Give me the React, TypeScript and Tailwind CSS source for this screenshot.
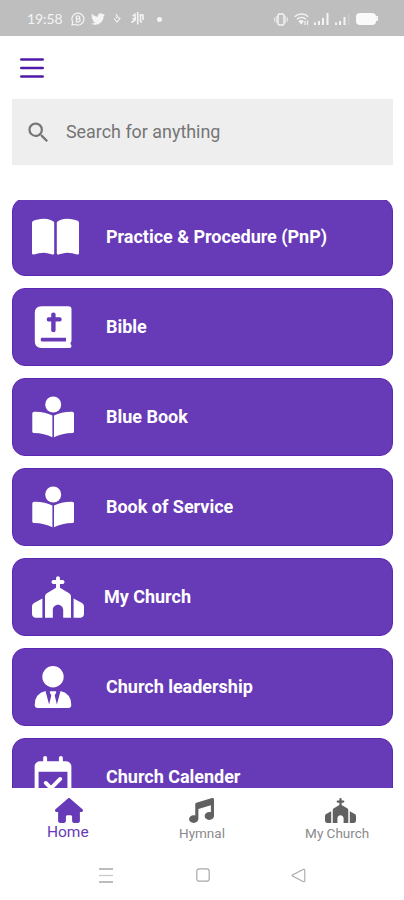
import React from "react";
import { FaTwitter } from "react-icons/fa";
import {
  FaBookOpen,
  FaChurch,
  FaHouse,
  FaMusic,
  FaRegCalendarCheck,
} from "react-icons/fa6";
import { MdSearch } from "react-icons/md";

const BibleIcon = ({ className }: { className?: string }) => (
  <svg viewBox="0 0 42 42" fill="currentColor" className={className}>
    <path
      fillRule="evenodd"
      d="M9.500.3H36.500Q39.500.3 39.500 3.300V34.500Q39.500 35.800 38.600 36.600V38.300Q39.500 38.800 39.500 40Q39.500 42 37.500 42H9.500Q2.800 42 2.800 35.500V7Q2.800.3 9.500.3zM19.200 8.300V11.300H16.500Q14.700 11.300 14.700 13.400T16.500 15.500H19.200V24.300Q19.200 26.300 21.400 26.300T23.600 24.300V15.500H27.700Q29.700 15.500 29.700 13.400T27.700 11.300H23.600V8.300Q23.600 6.500 21.400 6.500T19.200 8.300zM9.800 31.700Q8.700 31.700 8.700 33.600T9.800 35.600H34V31.700z"
    />
  </svg>
);

const ReaderIcon = ({ className }: { className?: string }) => (
  <svg viewBox="0 0 42 42" fill="currentColor" className={className}>
    <circle cx="21.200" cy="8.500" r="8" />
    <path d="M2.200 15.800Q13 15.600 20.400 19.600V41.300Q12.500 37.300 2 37.100Q.3 37 .3 35.400V17.500Q.3 15.900 2.200 15.800z" />
    <path d="M40.200 15.800Q29.400 15.600 22 19.600V41.300Q29.900 37.300 40.400 37.100Q42 37 42 35.400V17.500Q42 15.900 40.200 15.800z" />
  </svg>
);

const LeaderIcon = ({ className }: { className?: string }) => (
  <svg viewBox="0 0 42 42" fill="currentColor" className={className}>
    <circle cx="21" cy="10.800" r="10.700" />
    <path d="M13.500 25Q2.700 27.500 2.700 39Q2.700 42 5.700 42H36.300Q39.300 42 39.300 39Q39.300 27.500 28.500 25L24.900 38.500L22.700 29.500L24.200 26.500Q24.500 25.300 23.500 25.300H18.500Q17.500 25.300 17.800 26.500L19.300 29.500L17.100 38.500z" />
  </svg>
);

const menu = [
  { title: "Practice & Procedure (PnP)", icon: FaBookOpen, size: "h-[42px] w-[47px]" },
  { title: "Bible", icon: BibleIcon, size: "h-[42px] w-[42px]" },
  { title: "Blue Book", icon: ReaderIcon, size: "h-[42px] w-[42px]" },
  { title: "Book of Service", icon: ReaderIcon, size: "h-[42px] w-[42px]" },
  { title: "My Church", icon: FaChurch, size: "h-[42px] w-[52px]", wide: true },
  { title: "Church leadership", icon: LeaderIcon, size: "h-[42px] w-[42px]" },
  { title: "Church Calender", icon: FaRegCalendarCheck, size: "h-[42px] w-[42px]" },
];

const StatusBar = () => {
  return (
    <div className="flex h-9 shrink-0 items-center bg-[#bebebe] pl-[27px] text-[#f4f4f4]">
      <span className="w-[44px] text-[14px] tracking-[-0.1px] font-['Lato']">
        19:58
      </span>
      {/* notifications */}
      <svg width="14" height="14" viewBox="0 0 14 14" fill="none" stroke="currentColor" className="mt-px">
        <path d="M1 13l.7-3A6 6 0 1 1 4 12.3z" strokeWidth="1.2" />
        <path d="M5.4 4h2a1.3 1.3 0 0 1 0 2.8h-2zM5.4 6.8h2.3a1.5 1.5 0 0 1 0 3H5.4z" strokeWidth="1.2" />
      </svg>
      <FaTwitter size={14} className="ml-[6px] mt-px" />
      <svg width="8" height="10" viewBox="0 0 8 10" fill="none" stroke="currentColor" className="ml-[8px]">
        <path d="M3 1l1.500 2.500L3 5M1 5.500L4 9l3-3.500-2-1" strokeWidth="1.1" />
      </svg>
      <svg width="13" height="13" viewBox="0 0 13 13" fill="none" stroke="currentColor" className="ml-[10px] mt-px">
        <path d="M4 1.500v6.500L.5 10.500M1.500 3.500H4M1.500 6.800H5M6.700 0v12.500M9.500 2v7.500l1.500.5M9.500 3h2.500v5" strokeWidth="1.6" />
      </svg>
      <span className="ml-[13px] mt-[2px] size-[5px] rounded-full bg-[#f4f4f4]" />

      {/* vibrate, wifi, signal, battery */}
      <svg width="14" height="13" viewBox="0 0 14 13" fill="none" stroke="currentColor" className="ml-[112px] mt-[2px]">
        <rect x="4" y="1" width="6" height="11" rx="1.5" strokeWidth="1.5" />
        <path d="M2.300 3v7M.6 4.500v4M11.700 3v7M13.400 4.500v4" strokeWidth="0.8" />
      </svg>
      <svg width="15" height="13" viewBox="0 0 15 13" fill="none" stroke="currentColor" className="ml-[6px] mt-[2px]">
        <path d="M.7 3.800C4.500.2 10.500.2 14.300 3.800M3 6.200c2.600-2.300 6.400-2.300 9 0" strokeWidth="1.5" />
        <path d="M4.500 8.200c1.700-1.500 3.700-1.500 5.400 0L7.200 11.800z" fill="currentColor" stroke="none" />
        <path d="M11 8V12M13.500 7.500V12" strokeWidth="1.2" />
      </svg>
      <svg width="15" height="12" viewBox="0 0 15 12" fill="currentColor" className="ml-[5px] mt-[2px]">
        <path d="M0 9.500h2V12H0zM4 8h2v4H4zM8 5h2v7H8zM12.500 0h2v12h-2z" />
      </svg>
      <svg width="15" height="12" viewBox="0 0 15 12" fill="currentColor" className="ml-[6px] mt-[2px]">
        <path d="M0 9.500h2V12H0zM4 8h2v4H4zM8.500 4h2v8h-2z" />
        <path d="M13 1h1.500v11H13z" opacity=".2" />
      </svg>
      <span className="ml-[6px] mt-px h-3 w-[20px] rounded-[4px] bg-[#fafafa]" />
      <span className="mt-px h-[5px] w-[2px] bg-[#f4f4f4]" />
    </div>
  );
};

const App = () => {
  return (
    <main className="flex h-[900px] w-[404px] flex-col overflow-hidden bg-white font-['Roboto',sans-serif]">
      <StatusBar />

      {/* menu button */}
      <div className="h-[63px] shrink-0 pl-5 pt-[22px]">
        <svg width="24" height="20" viewBox="0 0 24 20" fill="none" stroke="#4f1ba8">
          <path d="M1.300 1.500h21.400M1.300 10h21.400M1.300 18.500h21.400" strokeWidth="2.600" strokeLinecap="round" />
        </svg>
      </div>

      <div className="ml-3 mr-[11px] flex h-[66px] shrink-0 items-center bg-[#eeeeee] pl-[13px] text-[#757575]">
        <MdSearch size={27} />
        <p className="ml-[14px] text-[17.900px] leading-none">
          Search for anything
        </p>
      </div>

      <div className="mt-[35px] h-[588px] shrink-0 overflow-hidden">
        <div className="-mt-[2px] ml-3 mr-[11px] flex flex-col gap-3">
          {menu.map((item) => (
            <div
              key={item.title}
              className="flex h-[78px] shrink-0 items-center rounded-[13px] border border-[#5b27b0] bg-[#673ab7] pl-[19px] text-white"
            >
              <div className={item.wide ? "w-[72px]" : "w-[74px]"}>
                <item.icon className={item.size} />
              </div>
              <p className="pb-[2px] text-[18px] font-bold tracking-[-0.02px]">
                {item.title}
              </p>
            </div>
          ))}
        </div>
      </div>

      {/* bottom tabs */}
      <div className="grid h-[62px] shrink-0 grid-cols-3 bg-white text-[#8a8a8a]">
        <div className="flex flex-col items-center pl-[4px] pt-[10px] text-[#673ab7]">
          <FaHouse className="h-[25px] w-[28px]" />
          <p className="-ml-[3px] text-[15.500px] leading-[18px]">Home</p>
        </div>
        <div className="flex flex-col items-center pt-[10px]">
          <FaMusic size={25} className="text-[#616161]" />
          <p className="mt-px text-[13.500px] leading-[18px]">Hymnal</p>
        </div>
        <div className="flex flex-col items-center pt-[10px]">
          <FaChurch className="ml-[8px] h-[25px] w-[31px] text-[#616161]" />
          <p className="ml-px mt-px text-[13.500px] leading-[18px]">My Church</p>
        </div>
      </div>

      {/* system navigation */}
      <div className="flex h-[51px] items-center pl-[99px] text-[#a8a8a8]">
        <svg width="14" height="15" viewBox="0 0 14 15" fill="none" stroke="currentColor">
          <path d="M0 1h14M0 14h14" strokeWidth="1.3" />
          <path d="M0 7.500h14" strokeWidth="1.3" opacity=".6" />
        </svg>
        <svg width="14" height="14" viewBox="0 0 14 14" fill="none" stroke="currentColor" className="ml-[83px]">
          <rect x=".8" y=".8" width="12.400" height="12.400" rx="2.500" strokeWidth="1.2" />
        </svg>
        <svg width="15" height="15" viewBox="0 0 15 15" fill="none" stroke="currentColor" className="ml-[81px]">
          <path d="M12.500 1.300L1.500 6.900q-.8.600 0 1.200L12.500 13.700q1.300.3 1.300-1V2.300q0-1.300-1.300-1z" strokeWidth="1.1" />
        </svg>
      </div>
    </main>
  );
};

export default App;
